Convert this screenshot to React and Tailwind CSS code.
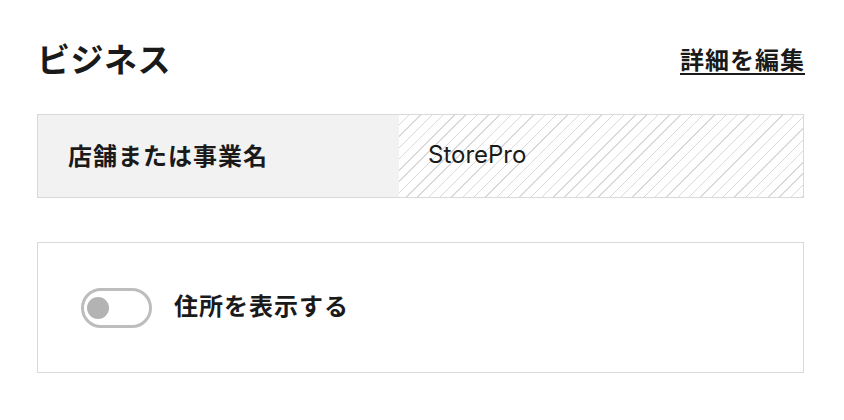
export default function App() {
  return (
    <div
      className="w-[844px] h-[420px] bg-white text-[#1a1a1a] pl-[37px] pr-[40px] pt-[38px]"
      style={{ fontFamily: '"Noto Sans CJK JP", "Noto Sans", sans-serif' }}
    >
      <div className="flex items-center justify-between h-[44px]">
        <h1 className="text-[33px] font-bold leading-none tracking-[0.5px] pb-[3px]">ビジネス</h1>
        <a className="text-[24px] font-bold leading-none underline underline-offset-[4px] decoration-2 tracking-[1px] -mr-[1px] pb-[3px]">
          詳細を編集
        </a>
      </div>
      <div className="mt-[32px] flex h-[84px] border border-[#d9d9d9]">
        <div className="w-[361px] bg-[#f2f2f2] flex items-center pl-[30px] pb-[3px] text-[24px] font-bold tracking-[1px]">
          店舗または事業名
        </div>
        <div className="flex-1 flex items-center pl-[29px] pb-[3px] text-[24px] bg-[repeating-linear-gradient(-45deg,#d9d9d9_0px,#d9d9d9_1px,transparent_1px,transparent_8px)]"
          style={{ fontFamily: 'Inter, "Noto Sans", sans-serif' }}
        >
          StorePro
        </div>
      </div>
      <div className="mt-[44px] h-[131px] border border-[#d9d9d9] flex items-center pl-[43px]">
        <div className="w-[71px] h-[40px] rounded-full border-[3px] border-[#bdbdbd] flex items-center pl-[3px]">
          <div className="w-[22px] h-[22px] rounded-full bg-[#b3b3b3]" />
        </div>
        <span className="ml-[22px] text-[24px] font-bold tracking-[1px] leading-none pb-[6px]">住所を表示する</span>
      </div>
    </div>
  );
}
